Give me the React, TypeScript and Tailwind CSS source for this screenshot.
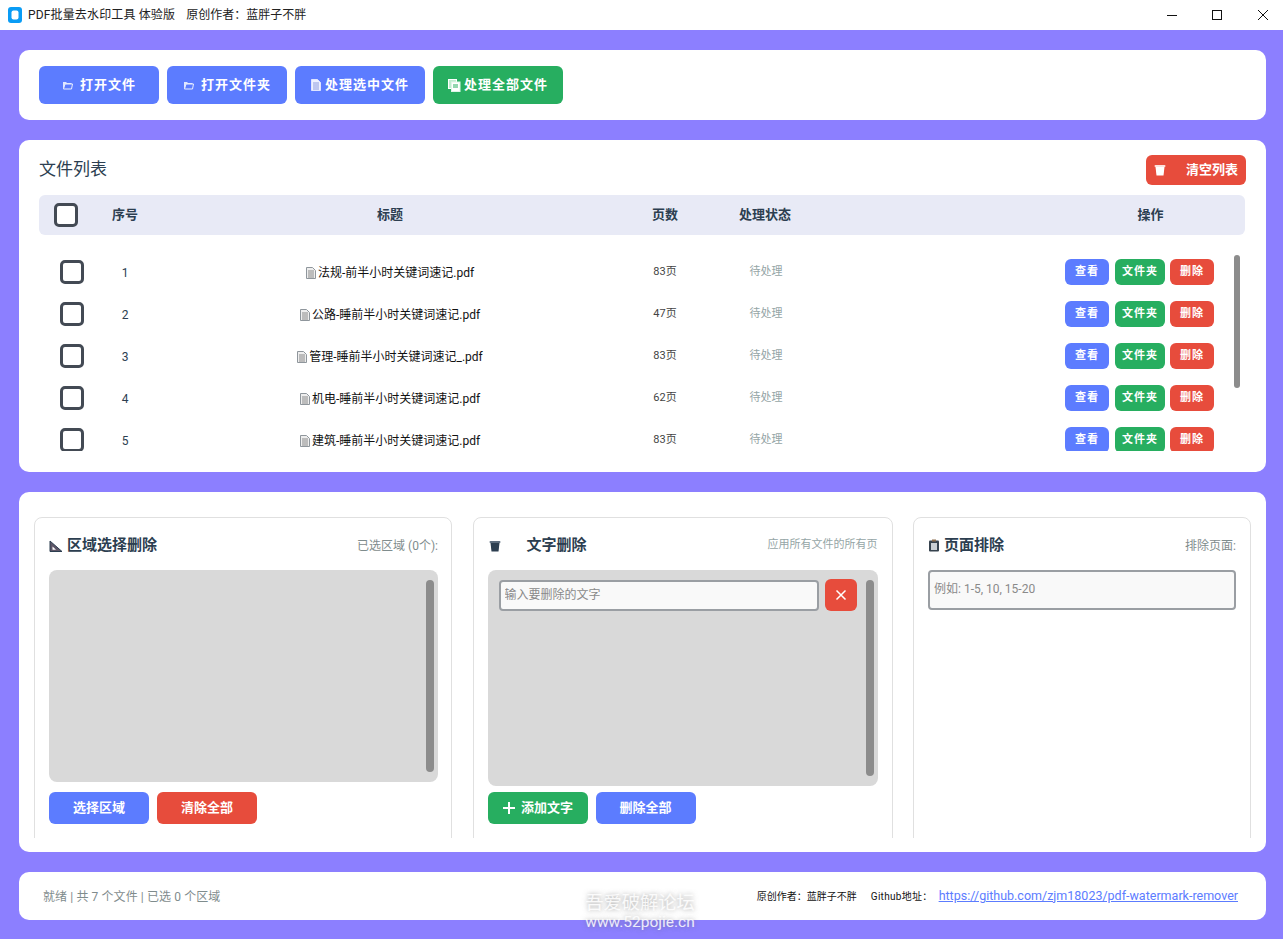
import type { ReactNode } from "react";

const files = [
  { id: 1, name: "法规-前半小时关键词速记.pdf", pages: 83 },
  { id: 2, name: "公路-睡前半小时关键词速记.pdf", pages: 47 },
  { id: 3, name: "管理-睡前半小时关键词速记_.pdf", pages: 83 },
  { id: 4, name: "机电-睡前半小时关键词速记.pdf", pages: 62 },
  { id: 5, name: "建筑-睡前半小时关键词速记.pdf", pages: 83 },
];

const tableCols = "grid grid-cols-[56px_60px_470px_80px_120px_232px_187px] items-center";

function FolderIcon() {
  return (
    <svg width="11" height="10" viewBox="0 0 11 10" className="shrink-0">
      <path d="M1 2h3l1 1h4.5v1H3L1.5 8.5H1z" fill="#dfe6ff" />
      <path d="M3 4h7.5L9.5 9h-8z" fill="none" stroke="#e8edff" strokeWidth="1" />
    </svg>
  );
}

function DocIcon({ light }: { light?: boolean }) {
  return (
    <svg width="10" height="12" viewBox="0 0 10 12" className="shrink-0">
      <path
        d="M0.5 0.5h6l3 3v8h-9z"
        fill={light ? "#eef1ff" : "#eeeeee"}
        stroke={light ? "#dfe4ff" : "#8f969c"}
      />
      <path
        d="M2 4h6M2 6h6M2 8h6M2 10h6"
        stroke={light ? "#8c9ce0" : "#8a8a8a"}
        strokeWidth="1"
      />
    </svg>
  );
}

function CopyDocIcon() {
  return (
    <svg width="13" height="13" viewBox="0 0 13 13" className="shrink-0">
      <rect x="0.5" y="0.5" width="8" height="9" fill="#bfeccf" stroke="#ffffff" />
      <rect x="3.5" y="3" width="8.5" height="9.5" fill="#ffffff" stroke="#dff5e7" />
      <path d="M5 6h5M5 8h5" stroke="#27ae60" />
    </svg>
  );
}

function TrashIcon({ light }: { light?: boolean }) {
  const body = light ? "#ffffff" : "#2c3e50";
  const rim = light ? "#fde3df" : "#5d6d7e";
  return (
    <svg width="12" height="12" viewBox="0 0 12 12" className="shrink-0">
      <rect x="0.5" y="1" width="11" height="2" rx="1" fill={rim} />
      <path d="M1.5 3h9L9.5 11.5h-7z" fill={body} />
    </svg>
  );
}

function RulerIcon() {
  return (
    <svg width="14" height="12" viewBox="0 0 14 12" className="shrink-0">
      <path d="M1 1l12 10.5H1z" fill="#5d5566" stroke="#2c3e50" strokeWidth="1" />
      <path d="M3.5 6.5l3.5 3.2H3.5z" fill="#fff" />
    </svg>
  );
}

function ClipboardIcon() {
  return (
    <svg width="12" height="13" viewBox="0 0 12 13" className="shrink-0">
      <rect x="1" y="1.5" width="10" height="11" rx="1" fill="#36424e" />
      <rect x="3" y="4" width="6" height="7" fill="#c9ced3" />
      <rect x="4" y="0.5" width="4" height="2" fill="#8d6e4f" />
    </svg>
  );
}

function Checkbox() {
  return (
    <input
      type="checkbox"
      className="block size-6 appearance-none rounded-[5px] border-[3px] border-[#434a54] bg-white"
    />
  );
}

function Button({
  children,
  className = "",
}: {
  children: ReactNode;
  className?: string;
}) {
  return (
    <button
      className={`flex items-center justify-center rounded-md font-bold text-white ${className}`}
    >
      {children}
    </button>
  );
}

function Scrollbar({ className = "" }: { className?: string }) {
  return <div className={`rounded-full bg-[#8c8c8c] ${className}`} />;
}

function Toolbar() {
  const big = "h-[38px] gap-[3px] text-[13px] tracking-[1px]";
  return (
    <section className="flex h-[70px] items-center gap-2 rounded-[10px] bg-white px-5">
      <Button className={`${big} w-[120px] bg-[#5c7cff]`}>
        <FolderIcon />
        <span className="ml-1">打开文件</span>
      </Button>
      <Button className={`${big} w-[120px] bg-[#5c7cff]`}>
        <FolderIcon />
        <span className="ml-1">打开文件夹</span>
      </Button>
      <Button className={`${big} w-[130px] bg-[#5c7cff]`}>
        <DocIcon light />
        <span className="ml-[1px]">处理选中文件</span>
      </Button>
      <Button className={`${big} w-[130px] bg-[#27ae60]`}>
        <CopyDocIcon />
        <span>处理全部文件</span>
      </Button>
    </section>
  );
}

function FileRow({ id, name, pages }: { id: number; name: string; pages: number }) {
  const small = "h-[26px] pt-px text-[11px] tracking-[1px]";
  return (
    <div className={`${tableCols} h-[42px] shrink-0`}>
      <div className="pl-[21px]">
        <Checkbox />
      </div>
      <div className="pt-px text-center text-xs text-[#2c3e50]">{id}</div>
      <div className="flex items-center justify-center gap-[2px] pt-px text-xs text-[#111]">
        <DocIcon />
        <span>{name}</span>
      </div>
      <div className="pt-px text-center text-[11px] text-[#444]">{pages}页</div>
      <div className="pl-[2px] pt-px text-center text-[11px] text-[#95a5a6]">待处理</div>
      <div />
      <div className="flex pl-2">
        <Button className={`${small} w-11 bg-[#5c7cff]`}>查看</Button>
        <Button className={`${small} ml-[6px] w-[50px] bg-[#27ae60]`}>文件夹</Button>
        <Button className={`${small} ml-[5px] w-11 bg-[#e74c3c]`}>删除</Button>
      </div>
    </div>
  );
}

function FileList() {
  return (
    <section className="h-[332px] rounded-[10px] bg-white pl-5 pr-5 pt-[15px]">
      <div className="flex h-[30px] items-center justify-between">
        <h2 className="text-[17px] font-normal text-[#2c3e50]">文件列表</h2>
        <Button className="h-[30px] w-[100px] justify-between! bg-[#e74c3c] pl-2 pr-2 text-[13px]">
          <TrashIcon light />
          <span>清空列表</span>
        </Button>
      </div>
      <div
        className={`${tableCols} mr-px mt-[10px] h-10 rounded-md bg-[#e8eaf6] text-[13px] font-bold text-[#2c3e50]`}
      >
        <div className="pl-[15px]">
          <Checkbox />
        </div>
        <div className="text-center">序号</div>
        <div className="text-center">标题</div>
        <div className="text-center">页数</div>
        <div className="text-center">处理状态</div>
        <div />
        <div className="text-center">操作</div>
      </div>
      <div className="relative mr-px mt-4 flex h-[200px] flex-col overflow-hidden">
        {files.map((f) => (
          <FileRow key={f.id} {...f} />
        ))}
        <Scrollbar className="absolute right-[5px] top-1 h-[133px] w-[6px]" />
      </div>
    </section>
  );
}

function Panel({
  className = "",
  icon,
  title,
  note,
  children,
}: {
  className?: string;
  icon: ReactNode;
  title: ReactNode;
  note: ReactNode;
  children: ReactNode;
}) {
  return (
    <div className={`h-[340px] rounded-lg border border-[#e0e0e0] bg-white pt-[15px] ${className}`}>
      <div className="flex h-[25px] items-center justify-between">
        <div className="flex items-center text-[15px] font-bold text-[#2c3e50]">
          {icon}
          {title}
        </div>
        {note}
      </div>
      {children}
    </div>
  );
}

function ActionPanels() {
  return (
    <section className="h-[360px] rounded-[10px] bg-white px-[15px] pt-[25px]">
      <div className="grid h-[321px] grid-cols-[418px_420px_338px] gap-x-[20.5px] overflow-hidden">
        <Panel
          className="pl-[14px] pr-[13px]"
          icon={<RulerIcon />}
          title={<span className="ml-1">区域选择删除</span>}
          note={<span className="text-xs text-[#7f8c8d]">已选区域 (0个):</span>}
        >
          <div className="mt-3 flex h-[212px] justify-end rounded-lg bg-[#d9d9d9] py-[10px] pr-1">
            <Scrollbar className="w-2 rounded-[4px]" />
          </div>
          <div className="mt-[10px] flex gap-2">
            <Button className="h-8 w-[100px] bg-[#5c7cff] text-[13px]">选择区域</Button>
            <Button className="h-8 w-[100px] bg-[#e74c3c] text-[13px]">清除全部</Button>
          </div>
        </Panel>
        <Panel
          className="px-[14px]"
          icon={
            <span className="ml-px">
              <TrashIcon />
            </span>
          }
          title={<span className="ml-[26px]">文字删除</span>}
          note={<span className="text-[11px] text-[#95a5a6]">应用所有文件的所有页</span>}
        >
          <div className="mt-3 flex h-[216px] items-start rounded-lg bg-[#d9d9d9] py-[10px] pl-[11px] pr-1">
            <input
              placeholder="输入要删除的文字"
              className="h-[31px] w-[320px] rounded-[4px] border-2 border-[#9a9ea3] bg-[#f9f9f9] px-1 pb-[2px] text-xs placeholder:text-[#8a8a8a]"
            />
            <Button className="-mt-px ml-[6px] h-8 w-8 bg-[#e74c3c] text-base font-normal">
              <svg width="12" height="12" viewBox="0 0 12 12">
                <path d="M1.5 1.5l9 9M10.5 1.5l-9 9" stroke="#fff" strokeWidth="1.5" />
              </svg>
            </Button>
            <Scrollbar className="ml-[9px] h-full w-2 rounded-[4px]" />
          </div>
          <div className="mt-[6px] flex gap-2">
            <Button className="h-8 w-[100px] gap-[5px] bg-[#27ae60] text-[13px]">
              <svg width="14" height="14" viewBox="0 0 14 14">
                <path d="M7 1v12M1 7h12" stroke="#fff" strokeWidth="2" />
              </svg>
              添加文字
            </Button>
            <Button className="h-8 w-[100px] bg-[#5c7cff] text-[13px]">删除全部</Button>
          </div>
        </Panel>
        <Panel
          className="px-[14px]"
          icon={<ClipboardIcon />}
          title={<span className="ml-1">页面排除</span>}
          note={<span className="text-xs text-[#7f8c8d]">排除页面:</span>}
        >
          <input
            placeholder="例如: 1-5, 10, 15-20"
            className="mt-3 block h-10 w-full rounded-[4px] border-2 border-[#9a9ea3] bg-[#f9f9f9] px-1 pb-[2px] text-xs placeholder:text-[#8a8a8a]"
          />
        </Panel>
      </div>
    </section>
  );
}

function StatusBar() {
  return (
    <footer className="flex h-12 items-center justify-between rounded-[10px] bg-white pl-6 pr-7">
      <span className="pt-px text-xs tracking-[0.1px] text-[#7f8c8d]">就绪 | 共 7 个文件 | 已选 0 个区域</span>
      <div className="flex items-center text-[10px] text-[#111]">
        <span>原创作者：蓝胖子不胖</span>
        <span className="ml-[14px] tracking-[0.3px]">Github地址：</span>
        <a href="#" className="ml-[6px] text-[12.5px] text-[#5c7cff] underline">
          https://github.com/zjm18023/pdf-watermark-remover
        </a>
      </div>
    </footer>
  );
}

function TitleBar() {
  return (
    <header className="flex h-[30px] items-center justify-between bg-white pl-2 text-xs text-[#222]">
      <div className="flex items-center gap-[6px]">
        <svg width="14" height="16" viewBox="0 0 14 16">
          <rect width="14" height="16" rx="3" fill="#0a9cf5" />
          <rect x="3.5" y="3.5" width="7" height="9" rx="2" fill="#fff" />
        </svg>
        <span className="tracking-[0.15px]">PDF批量去水印工具 体验版</span>
        <span className="ml-[5px]">原创作者：蓝胖子不胖</span>
      </div>
      <div className="flex items-center">
        <svg width="12" height="12" viewBox="0 0 12 12" className="mr-[33px]">
          <path d="M1 6.5h10" stroke="#111" />
        </svg>
        <svg width="12" height="12" viewBox="0 0 12 12" className="mr-[34px]">
          <rect x="1.5" y="1.5" width="9" height="9" fill="none" stroke="#111" />
        </svg>
        <svg width="12" height="12" viewBox="0 0 12 12" className="mr-[14px]">
          <path d="M1 1l10 10M11 1L1 11" stroke="#111" />
        </svg>
      </div>
    </header>
  );
}

export default function App() {
  return (
    <div className="relative flex h-screen flex-col overflow-hidden bg-[#8c7fff] font-['Roboto','Noto_Sans_CJK_SC',sans-serif]">
      <TitleBar />
      <main className="flex flex-col gap-5 pl-[19px] pr-[17px] pt-5">
        <Toolbar />
        <FileList />
        <ActionPanels />
        <StatusBar />
      </main>
      {/* forum watermark sits over the status bar */}
      <div className="absolute left-[585px] top-[891px] w-[110px] text-center text-white/85 [text-shadow:0_0_5px_rgba(100,100,100,0.6)]">
        <div className="text-[18.3px] leading-6">吾爱破解论坛</div>
        <div className="-mt-[3px] text-[15.5px] leading-5">www.52pojie.cn</div>
      </div>
    </div>
  );
}
